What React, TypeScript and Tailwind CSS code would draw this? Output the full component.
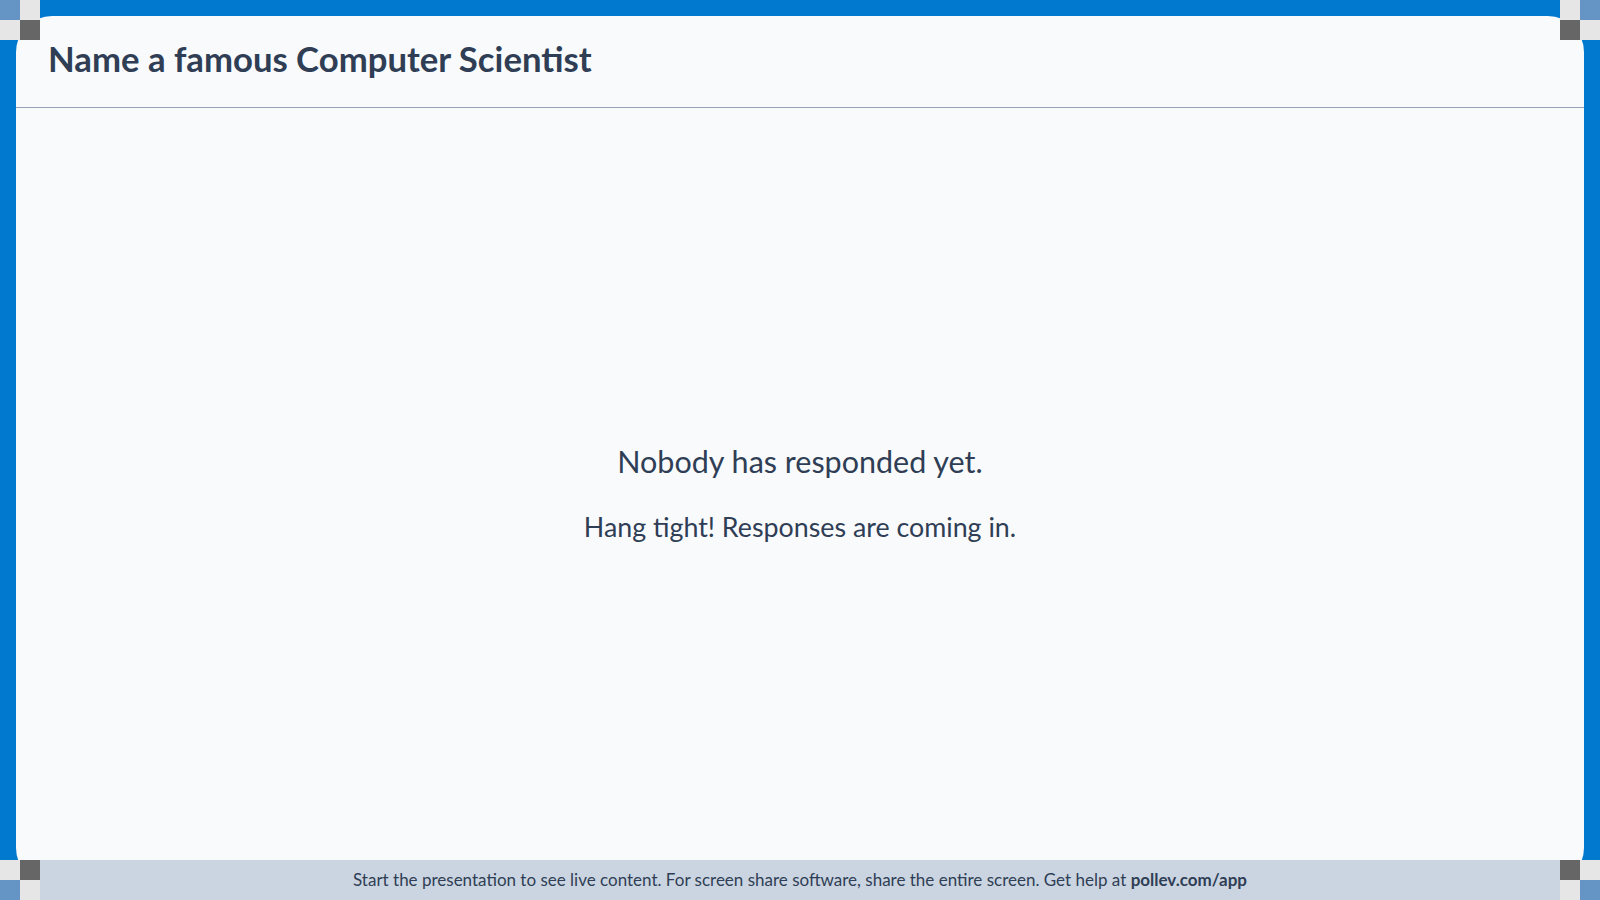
import React from "react"

const Corner = ({ className, cells }: { className: string; cells: string[] }) => (
  <div className={`absolute grid h-10 w-10 grid-cols-2 grid-rows-2 ${className}`}>
    {cells.map((c, i) => (
      <div key={i} className={c} />
    ))}
  </div>
)

const blue = "bg-[#6495c5]"
const light = "bg-[#e6e6e6]"
const dark = "bg-[#666666]"

export default function App() {
  return (
    <div
      className="relative flex h-screen w-full flex-col overflow-hidden bg-[#0179cf] px-4 pt-4"
      style={{ fontFamily: "Lato, 'Noto Sans', sans-serif" }}
    >
      <div className="-mb-6 flex flex-1 flex-col rounded-[36px] bg-[#f8fafc]">
        <header className="flex h-[92px] items-center border-b border-[#94a3b8] pb-[5px] pl-8">
          <h1 className="text-[34.7px] font-bold text-[#2f3e55]">Name a famous Computer Scientist</h1>
        </header>
        <main className="flex flex-1 flex-col items-center justify-center pb-[6px] text-[#2f3e55]">
          <h2 className="text-[30.5px] leading-[36px]">Nobody has responded yet.</h2>
          <p className="mt-[32px] text-[26.8px] leading-[32px]">Hang tight! Responses are coming in.</p>
        </main>
      </div>
      <footer className="relative -mx-4 flex h-10 items-center justify-center bg-[#cbd5e1] text-[17px] text-[#2f3e55]">
        <span>
          Start the presentation to see live content. For screen share software, share the entire screen. Get help at{" "}
          <b className="font-bold">pollev.com/app</b>
        </span>
      </footer>

      <Corner className="left-0 top-0" cells={[blue, light, light, dark]} />
      <Corner className="right-0 top-0" cells={[light, blue, dark, light]} />
      <Corner className="bottom-0 left-0" cells={[light, dark, blue, light]} />
      <Corner className="bottom-0 right-0" cells={[dark, light, light, blue]} />
    </div>
  )
}
